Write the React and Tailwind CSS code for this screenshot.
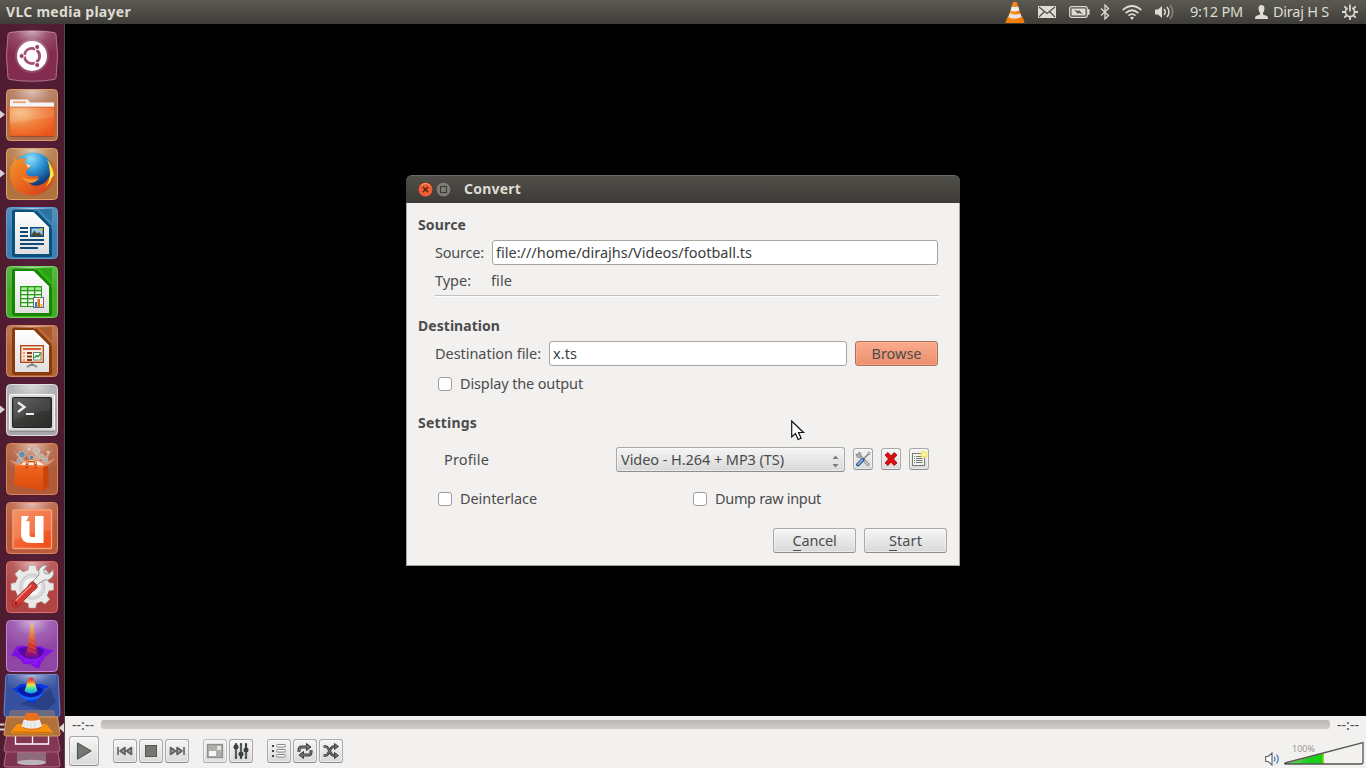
import { useLayoutEffect, useRef } from "react";

/* Text run set to a given width by spreading its letters evenly. */
function Run({ w, className = "", children }) {
  const ref = useRef(null);
  useLayoutEffect(() => {
    const el = ref.current;
    el.style.letterSpacing = "0px";
    const natural = el.getBoundingClientRect().width;
    el.style.letterSpacing = (w - natural) / el.textContent.length + "px";
  }, [w]);
  return (
    <span ref={ref} className={"inline-block shrink-0 whitespace-pre " + className}>
      {children}
    </span>
  );
}

function Defs() {
  return (
    <svg className="absolute h-0 w-0" aria-hidden="true">
      <defs>
        <radialGradient id="gloss" cx="0.5" cy="0" r="0.75">
          <stop offset="0" stopColor="#fff" stopOpacity="0.6" />
          <stop offset="0.5" stopColor="#fff" stopOpacity="0.15" />
          <stop offset="1" stopColor="#fff" stopOpacity="0" />
        </radialGradient>
        <radialGradient id="folder" cx="0.25" cy="0.2" r="0.95">
          <stop offset="0" stopColor="#f5bd80" />
          <stop offset="0.45" stopColor="#f0853f" />
          <stop offset="1" stopColor="#ec5219" />
        </radialGradient>
        <radialGradient id="globe" cx="0.45" cy="0.15" r="0.9">
          <stop offset="0" stopColor="#8fe0f8" />
          <stop offset="0.35" stopColor="#2a93d3" />
          <stop offset="0.75" stopColor="#0c3270" />
          <stop offset="1" stopColor="#0a2456" />
        </radialGradient>
        <linearGradient id="fox" x1="0" y1="0" x2="1" y2="1">
          <stop offset="0" stopColor="#f39a2a" />
          <stop offset="0.5" stopColor="#ea6420" />
          <stop offset="1" stopColor="#c93a1c" />
        </linearGradient>
        <linearGradient id="page" x1="0" y1="0" x2="0" y2="1">
          <stop offset="0" stopColor="#ffffff" />
          <stop offset="1" stopColor="#dfdfdf" />
        </linearGradient>
        <linearGradient id="screen" x1="0" y1="0" x2="1" y2="1">
          <stop offset="0" stopColor="#5a5a58" />
          <stop offset="0.5" stopColor="#3a3a39" />
          <stop offset="1" stopColor="#2a2a29" />
        </linearGradient>
        <linearGradient id="bag" x1="0" y1="0" x2="0" y2="1">
          <stop offset="0" stopColor="#f0671f" />
          <stop offset="1" stopColor="#dc4a0c" />
        </linearGradient>
        <linearGradient id="uone" x1="0" y1="0" x2="1" y2="1">
          <stop offset="0" stopColor="#f5834f" />
          <stop offset="1" stopColor="#f04a18" />
        </linearGradient>
        <linearGradient id="peak" x1="0" y1="0" x2="0" y2="1">
          <stop offset="0" stopColor="#f3c777" />
          <stop offset="0.35" stopColor="#e0743e" />
          <stop offset="0.65" stopColor="#cc2f34" />
          <stop offset="0.85" stopColor="#9a1470" />
          <stop offset="1" stopColor="#5a0ca4" />
        </linearGradient>
        <linearGradient id="jet" x1="0" y1="0" x2="0" y2="1">
          <stop offset="0" stopColor="#c8303c" />
          <stop offset="0.25" stopColor="#f4682a" />
          <stop offset="0.45" stopColor="#f2e63a" />
          <stop offset="0.7" stopColor="#3ae0b0" />
          <stop offset="1" stopColor="#1a90f0" />
        </linearGradient>
        <linearGradient id="volume" x1="0" y1="0" x2="1" y2="0">
          <stop offset="0" stopColor="#6fd76f" />
          <stop offset="0.6" stopColor="#1fcc1f" />
          <stop offset="1" stopColor="#12d012" />
        </linearGradient>
        <linearGradient id="cone" x1="0" y1="0" x2="1" y2="0">
          <stop offset="0" stopColor="#ffa32a" />
          <stop offset="1" stopColor="#ef6a00" />
        </linearGradient>
      </defs>
    </svg>
  );
}

function Tile({ fill, stroke, running, children }) {
  return (
    <div className="relative flex h-[52px] w-full shrink-0 pl-[6px]">
      {running && (
        <svg className="absolute left-0 top-[21px] h-[9px] w-[5px]" viewBox="0 0 5 9">
          <path d="M0 0.500 5 4.500 0 8.500z" fill="#d8d2d5" />
        </svg>
      )}
      <svg className="h-[52px] w-[52px]" viewBox="0 0 52 52">
        <rect x="0.500" y="0.500" width="51" height="51" rx="4" fill={fill} stroke={stroke} />
        <rect x="1" y="1" width="50" height="40" rx="4" fill="url(#gloss)" />
        {children}
      </svg>
    </div>
  );
}

function Document({ dark, mid }) {
  return (
    <>
      <path d="M9 2.500h36q1 0 1 1V48q0 2-2 2H9q-3 0-3-3V5q0-2.500 3-2.500z" fill={dark} />
      <path d="M27 2.500h19v19z" fill={mid} />
      <path d="M33 2.500h13v13z" fill={dark} opacity="0.35" />
      <path d="M29.500 4 45 20" stroke={dark} strokeWidth="2" />
      <path d="M9 5h18.500L43 20.500V47H9z" fill="url(#page)" />
      <path d="M27.500 5 43 20.500h-2L27 9z" fill="#fff" />
    </>
  );
}

function Launcher() {
  return (
    <aside className="flex w-[65px] shrink-0 flex-col gap-[7px] overflow-hidden border-r border-[#5f4453] bg-linear-to-r from-[#4e1b2f] via-[#561f38] to-[#4e1b2f] pt-[6px]">
      <div className="flex h-[52px] shrink-0 pl-[6px]">
        <svg className="h-[52px] w-[52px]" viewBox="0 0 52 52">
          <path d="M4 2.500Q26-1 48 2.500q2 0.300 2 2Q53 26 50 47.500q0 1.700-2 2Q26 53 4 49.500q-2-0.300-2-2Q-1 26 2 4.500q0-1.700 2-2z" fill="#832c50" stroke="#b07390" />
          <path d="M5 2Q26 0 47 2q2 0 3 3v30H2V5q1-3 3-3z" fill="url(#gloss)" />
          <circle cx="26" cy="26" r="17" fill="#fff" opacity="0.15" />
          <circle cx="26" cy="26" r="15" fill="#fff" />
          <circle cx="26" cy="26" r="7.600" fill="none" stroke="#a24f74" strokeWidth="2.800" strokeDasharray="14.400 1.500" strokeDashoffset="7" />
          <g fill="#94406a" stroke="#fff" strokeWidth="1">
            <circle cx="15.700" cy="26" r="2.500" />
            <circle cx="31.200" cy="17" r="2.500" />
            <circle cx="31.200" cy="35" r="2.500" />
          </g>
        </svg>
      </div>

      <Tile fill="#ae6e4d" stroke="#df9e6c" running>
        <path d="M4 11.500q0-1 1-1h16q1 0 2 1.500l1 1.500h23q1 0 1 1V20H4z" fill="#f5f5f5" />
        <rect x="7" y="12.300" width="13" height="1.800" fill="#ef9d69" />
        <path d="M3 19q0-1 1-1h44q1 0 1 1l-1 27q0 1-1 1H5q-1 0-1-1z" fill="url(#folder)" stroke="#d4562a" strokeWidth="0.600" />
        <path d="M4 19h44v9Q26 30 4 35z" fill="#fff" opacity="0.12" />
        <path d="M4 47.500h44" stroke="#76371f" opacity="0.5" />
      </Tile>

      <Tile fill="#b0733f" stroke="#e3a46a" running>
        <circle cx="27" cy="25" r="20.500" fill="url(#globe)" />
        <path d="M8 8Q9 11 11 12q4-3 9-1-2 3-1 5l5 1.500q1 2-2 3.500-2 1-2 4 2 4 7 3.500 4-1 5.500 0Q29 36 23 35q4 4 11 2 8-3 11-12 2-8-1-15 5 7 4.500 16Q46 46 27 47.500 6 47 4 28 3 19 8 13z" fill="url(#fox)" />
        <path d="M41 11q6 7 7 16l-2 3q-2 6-7 9 5-6 5-13 0-8-3-15z" fill="#f9cf22" />
        <path d="M43 16l2 9-2 9 4-8z" fill="#fff073" />
        <path d="M20 16l5 1.500-3 2.500z" fill="#f8d9c3" />
        <path d="M23 31q7 1 10-1-4 6-10 4.500-6-1.500-7-6 2 2 7 2.500z" fill="#f39530" />
      </Tile>

      <Tile fill="#3d7fae" stroke="#5da1d4">
        <Document dark="#09507f" mid="#3e86b5" />
        <g fill="#0f4b76">
          <rect x="14" y="20" width="8" height="2" />
          <rect x="14" y="24" width="8" height="2" />
          <rect x="14" y="28" width="8" height="2" />
          <rect x="14" y="32" width="24" height="2" />
          <rect x="14" y="36" width="24" height="2" />
          <rect x="14" y="40" width="18" height="2" />
        </g>
        <rect x="24.700" y="20.700" width="12.600" height="8.600" fill="#92c9ec" stroke="#0f4b76" strokeWidth="1.400" />
        <path d="M25.500 29v-1.500l3-4 2.500 3 2-1.500 4 4z" fill="#4b4b36" />
        <circle cx="35.500" cy="22.500" r="1.500" fill="#f0b11f" />
      </Tile>

      <Tile fill="#45a92d" stroke="#73d45e">
        <Document dark="#168500" mid="#35b31d" />
        <rect x="14" y="20" width="22" height="21" fill="#289b17" />
        <g fill="#a9e79b">
          <rect x="15.300" y="21.300" width="5.700" height="2.700" />
          <rect x="22.300" y="21.300" width="5.700" height="2.700" />
          <rect x="29.300" y="21.300" width="5.700" height="2.700" />
        </g>
        <g fill="#eef8eb">
          {[25.3, 29.3, 33.3, 37.3].map((y) => (
            <g key={y}>
              <rect x="15.300" y={y} width="5.700" height="2.700" />
              <rect x="22.300" y={y} width="5.700" height="2.700" />
              <rect x="29.300" y={y} width="5.700" height="2.700" />
            </g>
          ))}
        </g>
        <rect x="27.500" y="31.500" width="10" height="10" fill="#f5f5f5" stroke="#5e7073" />
        <rect x="29" y="36" width="2" height="5" fill="#2a80c3" />
        <rect x="31.500" y="33" width="2.500" height="8" fill="#e9641c" />
        <rect x="34.500" y="38" width="2" height="3" fill="#f0bd28" />
      </Tile>

      <Tile fill="#b0643b" stroke="#d98b5e">
        <Document dark="#893a0b" mid="#bb6a3b" />
        <path d="M26 38v2m-5 2 5-3 5 3" stroke="#858585" strokeWidth="1.800" fill="none" />
        <rect x="14.700" y="20.700" width="22.600" height="16.600" fill="#f9ece4" stroke="#b14a16" strokeWidth="1.400" />
        <rect x="17" y="23" width="18" height="2" fill="#cc6330" />
        <g fill="#e9a07a">
          <rect x="17" y="27" width="2" height="2" />
          <rect x="17" y="30.500" width="2" height="2" />
          <rect x="17" y="34" width="2" height="2" />
        </g>
        <g fill="#8d3c12">
          <rect x="21" y="27" width="5" height="2" />
          <rect x="21" y="30.500" width="5" height="2" />
          <rect x="21" y="34" width="5" height="2" />
        </g>
        <rect x="27.500" y="27.500" width="7.500" height="7.500" fill="#fff" stroke="#68806a" />
        <path d="m28.500 33 2-2.500 1.500 1.500 2.500-3.500" stroke="#1f9c24" strokeWidth="1.300" fill="none" />
      </Tile>

      <Tile fill="#a9a7aa" stroke="#dedee0" running>
        <rect x="3.500" y="10.500" width="45" height="36" rx="1" fill="#d8d8d8" stroke="#f8f8f8" />
        <path d="M3.500 47h45" stroke="#747474" />
        <rect x="6.500" y="13.500" width="39" height="30" rx="1" fill="url(#screen)" stroke="#222" />
        <path d="M8 14.500h36V26Q26 28 8 36z" fill="#fff" opacity="0.07" />
        <path d="m12 18.500 6.500 4.500-6.500 5" fill="none" stroke="#eee" strokeWidth="2.300" />
        <rect x="20" y="29" width="8" height="2" fill="#f0f0f0" />
      </Tile>

      <Tile fill="#b05c3b" stroke="#d98556">
        <path d="M26 23 7 7l10 14L3 17l8 6h30l9-8-10 4 6-13-12 13-2-13-6 12-7-12z" fill="#f7d8c2" opacity="0.45" />
        <path d="M14 22Q26 12 38 22z" fill="#fff3e8" opacity="0.9" />
        <g stroke="#d5cfca" strokeWidth="0.700">
          <circle cx="16" cy="11.500" r="3.400" fill="#668da5" />
          <circle cx="30.500" cy="8" r="3.200" fill="#c2b5ae" />
          <circle cx="25.500" cy="14.500" r="2.200" fill="#577f97" />
          <circle cx="35.500" cy="13.500" r="2.500" fill="#aab69f" />
          <circle cx="13" cy="17.500" r="2" fill="#839db0" />
          <circle cx="40" cy="17" r="1.800" fill="#8aa1b5" />
          <circle cx="23" cy="6" r="1.200" fill="#d9d9d9" />
          <circle cx="42" cy="9" r="1" fill="#f2e8a0" />
        </g>
        <path d="M9 21.500 37 23l0.500 25L8 42.500z" fill="url(#bag)" />
        <path d="M37 23l5-1.500 1 21-5.500 5.500z" fill="#c9440d" />
        <path d="M21 25.500v-5.500q0-2 2-2h4.500q2 0 2 2v5.500" fill="none" stroke="#c9440d" strokeWidth="2.600" />
        <path d="M21 21v-1.500q0-2 2-2h4.500q2 0 2 2V21" fill="none" stroke="#f9b78c" strokeWidth="1.200" />
        <path d="m9 22 28 1.500 5-1.500" stroke="#f58b4c" fill="none" strokeWidth="0.900" />
      </Tile>

      <Tile fill="#b95a3b" stroke="#dd8c64">
        <rect x="7" y="8" width="38.500" height="38.500" rx="1" fill="url(#uone)" stroke="#f9a27d" strokeWidth="1.400" />
        <path d="M8 9h37v19Q25 30 8 38z" fill="#fff" opacity="0.12" />
        <path d="M15.500 14H23l-3 5.500 3.500-0.500v13.500q0 2.500 2.500 2.500h3V14h8.500v27H25q-10 0-10-9z" fill="#fff" />
      </Tile>

      <Tile fill="#b14343" stroke="#d87270">
        <g fill="#e9e9e9">
          {[0, 45, 90, 135, 180, 225, 270, 315].map((a) => (
            <path key={a} transform={`rotate(${a} 26.300 25.700)`} d="M22 10.500 23 4.500h6.600l1 6z" stroke="#b9b4b4" strokeWidth="0.700" />
          ))}
          <circle cx="26.300" cy="25.700" r="17" />
        </g>
        <circle cx="26.300" cy="25.700" r="12.500" fill="#dadada" stroke="#c4c4c4" />
        <circle cx="26.300" cy="25.700" r="9" fill="#f4f4f4" />
        <path d="m31 24-4-4 6-6q-1.500-5.500 2.500-8.500 3-2 6-1l-4 4.500 1.500 3.500 4 0.500 4-4.500q2 5-1.500 8.500-3.500 3-7.500 2z" fill="#ececec" stroke="#8c8c8c" strokeWidth="0.900" />
        <path d="m26.500 20.500 5 5q-1.500 3-5 5L12.500 45q-2.500 2-5 0t-0.500-5L21.500 26q2-4 5-5.500z" fill="#d43a32" stroke="#992b27" />
        <path d="M25.500 24Q17 32 10 39.500" stroke="#f1918b" strokeWidth="1.500" fill="none" />
        <circle cx="10" cy="42.500" r="1.300" fill="#751b19" />
      </Tile>

      <Tile fill="#9046a4" stroke="#c587d3">
        <path d="M4 36q2.500-1.500 3.500-4t3-5q4-2.500 8-1l14 0.500q3-1 4.500 1 4 2 10.500 2.500-2 3-6 4-3 2.500-3.500 5.500-3.500 3-4.500 9-5 0-9-4.500-6 1-8-1-1-3-4-5.500-4-2-8.500-1.500z" fill="#8410ea" />
        <path d="M12 29q6-3 14-2.500t12 3.500q1 5-5 8-8 3-15-1-6-4-6-8z" fill="#560aa6" />
        <path d="M26 3.500q1.500 0 2 7l2.500 18q0.500 5 3 7-7 6-15.500 0 2.500-2 3-7L24 10.500q0.500-7 2-7z" fill="url(#peak)" />
        <path d="m24 12 4 2m-4.500 2 5 3m-5.500 2 6 3m-6.500 2 7.500 3m-8 1 8 3" stroke="#f8a565" strokeWidth="0.500" opacity="0.7" />
        <path d="M12 31q2 5 6.500 6.500 8 3 15-0.500 4-2 5.500-7 1 9-5 12-7 4-14 1-7-3-8-12z" fill="#8c16f2" />
        <path d="m8 34 6 1m-3 2 7 3m2 3 7-1m4 2 3-4m4-4 5-2" stroke="#5b0cb5" strokeWidth="0.700" />
      </Tile>

      <svg className="mt-[-7px] h-[96px] w-[64px] shrink-0" viewBox="0 0 64 96">
        <path d="M9 62h46l5 31q0 2-2 2H6q-2 0-2-2z" fill="#7c3350" stroke="#b86b87" />
        <path d="M17 78h29v13q-14 4-29 0z" fill="#8e6b79" />
        <ellipse cx="31.500" cy="90.500" rx="14.500" ry="2.800" fill="#bdb4b8" />
        <path d="M9 50h46l5 28q0 2-2 2H6q-2 0-2-2z" fill="#843754" stroke="#b06280" />
        <path d="M15.500 62v10h33V62M32.500 64v8" stroke="#fff" strokeWidth="1.300" fill="none" />
        <path d="M8 2.500h48q2 0 2.200 2L60 41q0 4-3 4H7q-3 0-3-4L5.800 5Q6 2.500 8 2.500z" fill="#36519f" stroke="#6e87cf" />
        <path d="M8 3h48l2 22H6z" fill="url(#gloss)" />
        <path d="m20 32 22-10 8-6 6 14-10 9z" fill="#1a2a60" opacity="0.4" />
        <path d="M12 17q4-1 6.500-3.500 3-2.500 6.500-1.500h16q3 1.500 8 1.500-1 2.500-5 3.500 0.500 5-4.500 7-3.500 3-5.500 7-5-0.500-9-4-4-1-6-5-3-3-7-5z" fill="#0637e2" />
        <path d="M17 17q14-7 26 0-3 8-12 8-10-0.500-14-8z" fill="#0a1aa6" />
        <path d="M17 18q2 7 14 7.500Q42 25 43.500 18 43 27 31.500 28.500 19 28 17 18z" fill="#1565f5" />
        <path d="M31 5.500q3 0 3.700 5l2.800 8.500q-6.500 5-13 0l2.800-8.500q0.700-5 3.700-5z" fill="url(#jet)" />
        <path d="M11 38h42q1.500 0 1.800 1.500L55.500 45H8.500l1-5.500Q9.800 38 11 38z" fill="#b0875f" opacity="0.45" />
        <path d="M6.500 45h51l2.500 17q0 2-2 2H6q-2 0-2-2z" fill="#b0723a" stroke="#d79a58" />
        <path d="m17 52-6 8q0 1.500 1 1.500h40q1.500 0 0.500-1.500l-6-8z" fill="#f7920f" />
        <path d="m13 60 38.500 0.500" stroke="#c96508" />
        <path d="M26 41h11.500l4 15q-9.500 4-19.500 0z" fill="#e9701a" />
        <path d="M23.700 47.500q8 2.500 16 0l2.300 7q-10.500 4.500-20.500 0z" fill="#ededed" />
        <path d="M24 54.500v-5m3 6v-5m4 5.500v-5m4 4.500v-5" stroke="#c4c4c4" strokeWidth="0.500" />
        <path d="M0 52.500h4.500M0 57.500h4.500" stroke="#d8d2d5" strokeWidth="2" />
        <path d="m64 51-5 5 5 4.500z" fill="#e0dcde" />
      </svg>
    </aside>
  );
}

function TopBar() {
  return (
    <header className="flex h-[24px] shrink-0 items-center bg-linear-to-b from-[#5b5a52] to-[#3e3d39] pl-[6px] pr-[8px] text-[14.5px] leading-[24px] text-[#dfdbd2]">
      <Run w={125} className="text-[14px] font-bold">VLC media player</Run>
      <div className="ml-auto flex h-[24px] items-center">
        <svg className="h-[22px] w-[20px]" viewBox="0 0 20 22">
          <path d="m3 15-2.500 6q0 1 1 1h17q1 0 1-1L17 15z" fill="#f47d05" />
          <path d="M8 1.500q2-1.500 4 0L17 17q-7 4-14 0z" fill="url(#cone)" />
          <path d="m6.800 5.500-1.200 4q4.400 1.800 8.800 0l-1.200-4q-3 1-6.400 0z" fill="#eeeeee" />
          <path d="m4.500 12.500-1 3.500q6.500 3 13 0l-1-3.500q-5.500 2-11 0z" fill="#e6e6e6" />
        </svg>
        <svg className="ml-[13px] h-[12px] w-[18px]" viewBox="0 0 18 12">
          <rect width="18" height="12" fill="#dfdbd2" />
          <path d="m1 1 8 6.500L17 1M1 11l5.500-5.500M17 11l-5.500-5.500" stroke="#494842" strokeWidth="1.100" fill="none" />
        </svg>
        <svg className="ml-[13px] h-[12px] w-[21px]" viewBox="0 0 21 12">
          <rect x="0.700" y="0.700" width="17.600" height="10.600" rx="2" fill="none" stroke="#dfdbd2" strokeWidth="1.200" />
          <rect x="2.500" y="2.500" width="14" height="7" fill="#dfdbd2" />
          <rect x="19" y="3" width="1.600" height="6" rx="0.800" fill="#dfdbd2" />
          <path d="m5 3.500 4.500 2V3.800l4.500 4.700-4.500-2v1.700z" fill="#494842" />
        </svg>
        <svg className="ml-[10px] h-[16px] w-[10px]" viewBox="0 0 10 16">
          <path d="m1 4.500 7.500 7L5 15V1l3.500 3.500L1 11.500" stroke="#dfdbd2" strokeWidth="1.300" fill="none" />
        </svg>
        <svg className="ml-[12px] mt-[1px] h-[15px] w-[20px]" viewBox="0 0 20 15">
          <g fill="none" stroke="#dfdbd2" strokeWidth="1.700">
            <path d="M0.700 5Q10-3 19.300 5" />
            <path d="M3.700 8Q10 2.500 16.300 8" />
            <path d="M6.500 10.700Q10 7.700 13.500 10.700" />
          </g>
          <path d="M8 12.500q2-1.500 4 0L10 15z" fill="#dfdbd2" />
        </svg>
        <svg className="ml-[13px] h-[16px] w-[19px]" viewBox="0 0 19 16">
          <path d="M0 5.500h3L7 2v12l-4-3.500H0z" fill="#dfdbd2" />
          <g fill="none" stroke="#dfdbd2" strokeWidth="1.500">
            <path d="M9 5q2.500 3 0 6" />
            <path d="M12 3q4 5 0 10" />
            <path d="M15 1q5.500 7 0 14" opacity="0.4" />
          </g>
        </svg>
        <Run w={53} className="mb-[2px] ml-[16px]">9:12 PM</Run>
        <svg className="ml-[12px] h-[14px] w-[13px]" viewBox="0 0 13 14">
          <path d="M6.500 0Q9.500 0 9.500 3.500 9.500 6 8 8v1.500l4 1.500q1 0.500 1 3H0q0-2.500 1-3l4-1.500V8Q3.500 6 3.500 3.500 3.500 0 6.500 0z" fill="#dfdbd2" />
        </svg>
        <Run w={56} className="mb-[2px] ml-[5px]">Diraj H S</Run>
        <svg className="ml-[13px] h-[16px] w-[16px]" viewBox="0 0 16 16">
          <g stroke="#dfdbd2" fill="none">
            <path d="M5.800 4a4.600 4.600 0 1 0 4.400 0" strokeWidth="1.600" />
            <path d="M8 0.500v7" strokeWidth="1.700" />
            <path d="M0 8h3M13 8h3M8 13v3M2.300 2.300l2 2M13.700 2.300l-2 2M2.300 13.700l2-2M13.700 13.700l-2-2" strokeWidth="1.800" />
          </g>
        </svg>
      </div>
    </header>
  );
}

function Heading({ w, className = "", children }) {
  return (
    <h2 className={"flex h-[20px] shrink-0 items-center pl-[11px] text-[14px] font-bold leading-[20px] " + className}>
      <Run w={w}>{children}</Run>
    </h2>
  );
}

function Check({ w, label, className = "" }) {
  return (
    <label className={"flex items-center " + className}>
      <span className="mr-[8px] h-[14px] w-[14px] rounded-[3px] border border-[#a09c98] bg-white" />
      <Run w={w} className="mb-[2px]">{label}</Run>
    </label>
  );
}

const raised = "flex shrink-0 items-center justify-center rounded-[3px] border border-[#aaa8a6] border-b-[#8f8d8b] bg-linear-to-b from-[#f5f5f5] to-[#d9d9d9] shadow-[inset_0_0_0_1px_rgba(255,255,255,0.45)]";

function ConvertDialog() {
  return (
    <section className="absolute left-[341px] top-[151px] flex h-[391px] w-[554px] flex-col text-[14.5px] leading-[20px] text-[#4c4c4c]">
      <div className="flex h-[28px] shrink-0 items-center rounded-t-[6px] border-t border-[#6a6963] bg-linear-to-b from-[#504f49] to-[#3c3b37] pl-[12px]">
        <svg className="mt-[1px] h-[16px] w-[34px]" viewBox="0 0 34 16">
          <circle cx="7.500" cy="7.500" r="7.500" fill="#ec5e33" stroke="#33322e" strokeWidth="0.800" />
          <path d="M3 3.500q4.500-4 9 0" stroke="#f6997b" fill="none" />
          <path d="m5 5 5 5m0-5-5 5" stroke="#4a1c0d" strokeWidth="1.200" />
          <circle cx="25.500" cy="7.500" r="7.500" fill="#7d7c76" stroke="#33322e" strokeWidth="0.800" />
          <rect x="22.500" y="4.500" width="6" height="6" fill="none" stroke="#3c3b37" strokeWidth="1.100" />
        </svg>
        <Run w={57} className="mb-[1px] ml-[12px] text-[14px] font-bold text-[#dfdbd2]">Convert</Run>
      </div>
      <div className="flex grow flex-col border border-t-0 border-[#a5a29e] bg-[#f2f1f0] pt-[12px]">
        <Heading w={48}>Source</Heading>
        <div className="mt-[5px] flex h-[25px] items-center pl-[28px]">
          <Run w={49} className="mb-[2px]">Source:</Run>
          <div className="ml-[8px] flex h-[25px] w-[446px] items-center rounded-[3px] border border-[#aaa49e] bg-white pl-[3px] text-[#3c3c3c]">
            <Run w={256} className="mb-[2px]">file:///home/dirajhs/Videos/football.ts</Run>
          </div>
        </div>
        <div className="flex h-[30px] items-center pb-[1px] pl-[28px]">
          <Run w={36}>Type:</Run>
          <Run w={21} className="ml-[20px]">file</Run>
        </div>
        <div className="ml-[28px] h-[2px] w-[504px] border-b border-t border-b-white border-t-[#c3c1bf]" />
        <Heading w={82} className="mt-[19px]">Destination</Heading>
        <div className="mt-[5px] flex h-[25px] items-center pl-[28px]">
          <Run w={106} className="mb-[2px]">Destination file:</Run>
          <div className="ml-[8px] flex h-[25px] w-[298px] items-center rounded-[3px] border border-[#aaa49e] bg-white pl-[3px] text-[#3c3c3c]">
            <Run w={24} className="mb-[2px]">x.ts</Run>
          </div>
          <button className="ml-[8px] flex h-[25px] w-[83px] items-center justify-center rounded-[3px] border border-[#a9715c] bg-linear-to-b from-[#f9ab8c] to-[#ec8f6c] shadow-[inset_0_0_0_1px_rgba(255,190,160,0.45)]">
            <Run w={50} className="mb-[2px]">Browse</Run>
          </button>
        </div>
        <div className="mt-[8px] flex h-[20px] items-center pl-[31px]">
          <Check w={123} label="Display the output" />
        </div>
        <Heading w={59} className="mt-[19px]">Settings</Heading>
        <div className="mt-[14px] flex h-[25px] items-center pl-[37px]">
          <Run w={45} className="mb-[2px]">Profile</Run>
          <div className={raised + " ml-[127px] h-[25px] w-[229px]"}>
            <div className="flex grow items-center justify-between pl-[4px] pr-[5px]">
              <Run w={163} className="mb-[2px]">Video - H.264 + MP3 (TS)</Run>
              <svg className="mt-[3px] h-[13px] w-[7px]" viewBox="0 0 7 13">
                <path d="m0.500 4 3-3.500 3 3.500zM0.500 9h6l-3 3.500z" fill="#7b7b7b" />
              </svg>
            </div>
          </div>
          <button className={raised + " mb-[1px] ml-[8px] h-[22px] w-[20px]"}>
            <svg className="h-[16px] w-[16px]" viewBox="0 0 16 16">
              <path d="m4 4 9 9.500" stroke="#6f7373" strokeWidth="2.600" strokeLinecap="round" />
              <path d="m4 4 9 9.500" stroke="#d4d6d4" strokeWidth="1.300" strokeLinecap="round" />
              <path d="M1 3 3.500 4 4 1q2.500 0.500 2 4-1 1.500-3 1.500Q1 6 1 3z" fill="#b8bab8" stroke="#6f7373" strokeWidth="0.700" />
              <path d="M14.500 2 8 8.500" stroke="#7f8383" strokeWidth="1.500" />
              <circle cx="14" cy="2.300" r="1.300" fill="#ddd" stroke="#777" strokeWidth="0.600" />
              <path d="m7.500 9-4.500 4.500" stroke="#204a87" strokeWidth="3.800" strokeLinecap="round" />
              <path d="m7.300 9-4.300 4.300" stroke="#80abdc" strokeWidth="2" strokeLinecap="round" />
            </svg>
          </button>
          <button className={raised + " mb-[1px] ml-[8px] h-[22px] w-[20px]"}>
            <svg className="h-[14px] w-[14px]" viewBox="0 0 14 14">
              <path d="m1 3 3-2.500 3 3.500 3-3.500L13 3 9.500 7l3.500 4-3 2.500L7 10l-3 3.500L1 11l3.500-4z" fill="#dc0c10" stroke="#a20408" strokeWidth="0.800" />
            </svg>
          </button>
          <button className={raised + " mb-[1px] ml-[8px] h-[22px] w-[20px]"}>
            <svg className="h-[18px] w-[18px]" viewBox="0 0 18 18">
              <rect x="2.500" y="3.500" width="12" height="12" fill="#f4f4f2" stroke="#777975" />
              <path d="M4 6.500h1m1 0h6.500M4 8.500h1m1 0h6.500M4 10.500h1m1 0h6.500M4 12.500h1m1 0h6.500" stroke="#72746f" />
              <circle cx="14" cy="4.500" r="3.500" fill="#f6e95a" opacity="0.9" />
              <circle cx="14" cy="4.500" r="1.700" fill="#fdf9b8" />
            </svg>
          </button>
        </div>
        <div className="mt-[17px] flex h-[20px] items-center pl-[31px]">
          <Check w={77} label="Deinterlace" />
          <Check w={106} label="Dump raw input" className="ml-[156px]" />
        </div>
        <div className="mt-[19px] flex h-[25px] justify-end gap-[8px] pr-[12px]">
          <button className={raised + " h-[25px] w-[83px]"}>
            <Run w={44} className="mb-[2px]"><span className="border-b border-[#4c4c4c]">C</span>ancel</Run>
          </button>
          <button className={raised + " h-[25px] w-[83px]"}>
            <Run w={33} className="mb-[2px]"><span className="border-b border-[#4c4c4c]">S</span>tart</Run>
          </button>
        </div>
      </div>
      <svg className="absolute left-[385px] top-[245px] h-[22px] w-[14px]" viewBox="0 0 14 22">
        <path d="M0.700 1v16l3.800-3.500 2.600 6 3-1.300-2.600-5.700h5z" fill="#fff" stroke="#111" strokeWidth="1.200" />
      </svg>
    </section>
  );
}

function Control({ className = "", children }) {
  return (
    <button className={raised + " h-[24px] w-[24px] " + className}>
      <svg className="h-[18px] w-[18px] shrink-0" viewBox="0 0 18 18">{children}</svg>
    </button>
  );
}

function Player() {
  return (
    <footer className="flex h-[52px] shrink-0 flex-col bg-[#f2f1f0] text-[#4c4c4c]">
      <div className="flex h-[18px] items-center pl-[7px] text-[14px] leading-[18px]">
        <Run w={22}>--:--</Run>
        <div className="ml-[7px] mt-[-1px] h-[9px] w-[1229px] rounded-[3px] bg-linear-to-b from-[#b9b8b7] to-[#cfcecd]" />
        <Run w={22} className="ml-[7px]">--:--</Run>
      </div>
      <div className="flex h-[34px] items-center pl-[4px]">
        <button className={raised + " h-[30px] w-[30px]"}>
          <svg className="h-[20px] w-[18px]" viewBox="0 0 18 20">
            <path d="M2.500 2 16 10 2.500 18z" fill="#757770" stroke="#555753" strokeWidth="1.200" strokeLinejoin="round" />
          </svg>
        </button>
        <Control className="ml-[14px]">
          <path d="M2 5v8M9 5.500v7L4 9zM15.500 5.500v7L10.500 9z" fill="#9b9d98" stroke="#60625e" strokeWidth="1.600" strokeLinejoin="round" />
        </Control>
        <Control className="ml-[2px]">
          <rect x="3.500" y="3.500" width="11" height="11" fill="#757770" stroke="#555753" />
        </Control>
        <Control className="ml-[2px]">
          <path d="M16 5v8M2.500 5.500v7L7.500 9zM9 5.500v7L14 9z" fill="#9b9d98" stroke="#60625e" strokeWidth="1.600" strokeLinejoin="round" />
        </Control>
        <Control className="ml-[14px] opacity-70">
          <rect x="1.500" y="2.500" width="15" height="13" fill="#92938f" stroke="#666864" strokeWidth="1.300" />
          <rect x="3" y="9" width="7" height="5" fill="#f8f8f8" />
          <path d="M10.500 4H15v4.500L13.500 7l-1.500 1.500L10.500 7 12 5.500z" fill="#e8e8e8" />
        </Control>
        <Control className="ml-[2px]">
          <path d="M4 2v14M9 2v14M14 2v14" stroke="#3a3f40" strokeWidth="2.200" strokeLinecap="round" />
          <path d="M4 5v0M9 12v0M14 8v0" stroke="#3a3f40" strokeWidth="5" strokeLinecap="round" />
          <path d="M4 7v8M9 3v7M14 10v5" stroke="#8d9190" strokeWidth="0.700" />
        </Control>
        <Control className="ml-[14px]">
          <g fill="#3f4442">
            <rect x="2" y="3" width="2" height="2" /><rect x="2" y="8" width="2" height="2" /><rect x="2" y="13" width="2" height="2" />
          </g>
          <g fill="#fff" stroke="#777975" strokeWidth="0.900">
            <rect x="6.500" y="2.500" width="9" height="2.500" rx="1.200" /><rect x="6.500" y="7.500" width="9" height="2.500" rx="1.200" /><rect x="6.500" y="12.500" width="9" height="2.500" rx="1.200" />
          </g>
        </Control>
        <Control className="ml-[2px]">
          <path d="M3 10V8q0-3 3-3h5M15 8v2q0 3-3 3H7" fill="none" stroke="#3a3f40" strokeWidth="3" />
          <path d="m10.500 1.500 4.500 3.500-4.500 3.500zM7.500 9.500v7L3 13z" fill="#6b706f" stroke="#3a3f40" />
          <path d="M3 10V8q0-3 3-3h5M15 8v2q0 3-3 3H7" fill="none" stroke="#8f9492" strokeWidth="0.900" />
        </Control>
        <Control className="ml-[2px]">
          <path d="M1.500 4.500h2q2 0 4 4.500t4.500 4.500h1M1.500 13.500h2q2 0 4-4.500T12 4.500h1" fill="none" stroke="#3a3f40" strokeWidth="2.700" />
          <path d="m12.500 1.500 4 3-4 3zM12.500 10.500l4 3-4 3z" fill="#6b706f" stroke="#3a3f40" />
          <path d="M2 4.500h1.500q2 0 4 4.500t4.500 4.500M2 13.500h1.500q2 0 4-4.500T12 4.500" fill="none" stroke="#8f9492" strokeWidth="0.700" />
        </Control>
        <svg className="ml-auto mt-[15px] h-[14px] w-[15px]" viewBox="0 0 15 14">
          <path d="M0.700 4.500h2.500L7 1v12L3.200 9.500H0.700z" fill="#fff" stroke="#5e605c" strokeWidth="1.100" />
          <path d="M9 4.500q2 2.500 0 5M11.500 2.500q3.500 4.500 0 9" fill="none" stroke="#3b71b8" strokeWidth="1.200" />
        </svg>
        <div className="relative ml-[4px] mr-[2px] h-[34px] w-[80px]">
          <svg className="h-[34px] w-[80px]" viewBox="0 0 80 34">
            <path d="M1 30 40 19v11z" fill="url(#volume)" />
            <rect x="38.500" y="19" width="1.500" height="11" fill="#9ed221" />
            <path d="M1 29 79 8.500v19.500q0 2-2 2H2q-2 0-1-1z" fill="none" stroke="#555753" strokeWidth="1.300" />
          </svg>
          <span className="absolute left-[8px] top-[9px] flex text-[9px] leading-[12px] text-[#9a9896]">
            <Run w={23}>100%</Run>
          </span>
        </div>
      </div>
    </footer>
  );
}

export default function App() {
  return (
    <div className="flex h-[768px] w-[1366px] flex-col overflow-hidden bg-black font-['Noto_Sans','Open_Sans',sans-serif]">
      <Defs />
      <TopBar />
      <div className="flex min-h-0 grow">
        <Launcher />
        <main className="relative flex grow flex-col">
          <div className="grow bg-black" />
          <Player />
          <ConvertDialog />
        </main>
      </div>
    </div>
  );
}
